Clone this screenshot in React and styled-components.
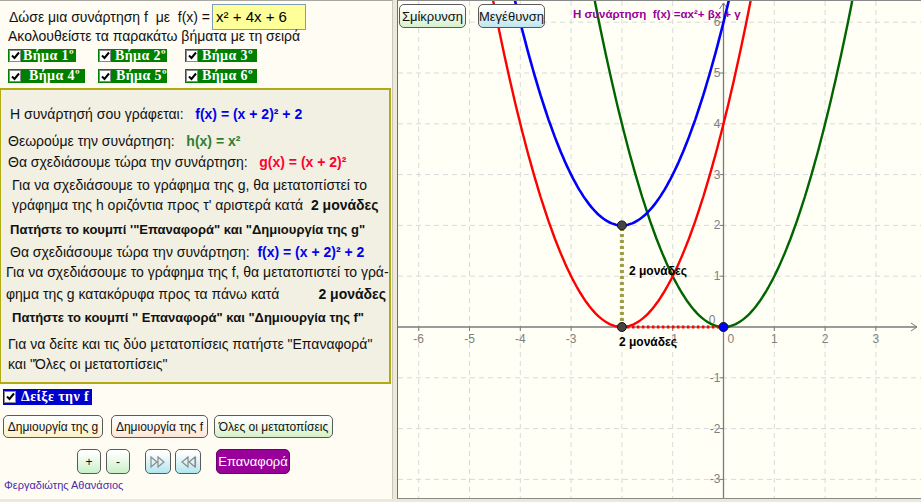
import React from "react";
import styled, { createGlobalStyle } from "styled-components";

const GlobalStyle = createGlobalStyle`
  body {
    margin: 0;
    background: #ece9d8;
    font-family: "Liberation Sans", Arial, sans-serif;
  }
`;

const O = { x: 325.5, y: 326 };
const U = 50.8;
const px = (x) => O.x + x * U;
const py = (y) => O.y - y * U;

const curve = (fn) => {
  const pts = [];
  for (let x = -9; x <= 5; x += 0.04) {
    const y = fn(x);
    if (y > 12) continue;
    pts.push(`${px(x).toFixed(1)},${py(y).toFixed(1)}`);
  }
  return "M" + pts.join(" L");
};

const Page = styled.div`
  display: flex;
  width: 921px;
  height: 499px;
`;

const LeftPanel = styled.div`
  width: 392px;
  height: 498px;
  background: #fffcf3;
  border-top: 1px solid #a8a8a0;
  border-right: 1px solid #c8c6bc;
  display: flex;
  flex-direction: column;
  overflow: hidden;
`;

const Spacer = styled.div`
  width: 4px;
`;

const GraphPanel = styled.div`
  position: relative;
  flex: 1;
  background: #fffff6;
  border-left: 1px solid #707070;
  border-top: 1px solid #8a8a8a;
  border-bottom: 1px solid #8a8a8a;
  overflow: hidden;
`;

const TopRow = styled.div`
  display: flex;
  align-items: center;
  height: 26px;
  margin-top: 3px;
  padding-left: 9px;
  font-size: 14px;
  color: #111;
  white-space: pre;
`;

const FuncInput = styled.div`
  margin-left: 2px;
  width: 89px;
  height: 24px;
  background: #ffff99;
  border: 1px solid #7f9db9;
  font-size: 15px;
  line-height: 24px;
  padding-left: 3px;
  color: #000;
`;

const Instruction = styled.div`
  padding-left: 8px;
  font-size: 14px;
  line-height: 17px;
  margin-top: -2px;
  color: #111;
`;

const StepGrid = styled.div`
  display: grid;
  grid-template-columns: 90px 87px auto;
  padding-left: 8px;
  row-gap: 7px;
  margin-top: 4px;
`;

const Step = styled.div`
  display: inline-flex;
  align-items: center;
  justify-self: start;
  height: ${(p) => p.$h || 13}px;
  width: ${(p) => p.$w}px;
  background: ${(p) => p.$bg || "#007f00"};
  color: #fff;
  font-family: "Liberation Serif", "DejaVu Serif", serif;
  font-weight: bold;
  font-size: 14px;
  letter-spacing: 0.4px;
  white-space: pre;
  gap: ${(p) => p.$pad || 3}px;
  overflow: hidden;
`;

const Box = styled.span`
  display: inline-flex;
  align-items: center;
  justify-content: center;
  flex: none;
  width: 12px;
  height: 12px;
  background: #fff;
  border: 1px solid #8a8a8a;
  box-sizing: border-box;
  margin-left: 1px;
`;

const Check = () => (
  <Box>
    <svg width="9" height="9" viewBox="0 0 9 9">
      <path d="M1 4.5 L3.5 7 L8 1.5" fill="none" stroke="#000" strokeWidth="2" />
    </svg>
  </Box>
);

const InfoPanel = styled.div`
  margin-top: 5px;
  height: 296px;
  width: 391px;
  box-sizing: border-box;
  background: #f1f0e2;
  border: 2px solid #b1ab12;
  border-left-width: 1px;
  display: flex;
  flex-direction: column;
  color: #111;
`;

const Line = styled.div`
  display: flex;
  align-items: center;
  height: 20px;
  margin-top: ${(p) => p.$gap}px;
  padding-left: ${(p) => p.$indent}px;
  padding-right: 3px;
  font-size: ${(p) => (p.$bold ? 13 : 14)}px;
  font-weight: ${(p) => (p.$bold ? "bold" : "normal")};
  white-space: pre;
  justify-content: ${(p) => (p.$spread ? "space-between" : "flex-start")};
`;

const Formula = styled.span`
  font-weight: bold;
  color: ${(p) => p.$color};
  font-size: 14px;
`;

const Strong = styled.span`
  font-weight: bold;
  font-size: 14px;
`;

const ShowRow = styled.div`
  margin-top: 3px;
  padding-left: 3px;
`;

const ButtonRow = styled.div`
  display: flex;
  gap: ${(p) => p.$gap || 7}px;
  padding-left: ${(p) => p.$indent}px;
  margin-top: ${(p) => p.$top}px;
`;

const Btn = styled.div`
  display: flex;
  align-items: center;
  justify-content: center;
  box-sizing: border-box;
  height: ${(p) => p.$h || 23}px;
  width: ${(p) => p.$w}px;
  margin-left: ${(p) => p.$ml || 0}px;
  border: 1px solid #5a5a5a;
  border-radius: 5px;
  background: linear-gradient(#ffffff 10%, ${(p) => p.$tint} 100%);
  font-size: 12px;
  color: #111;
  white-space: pre;
`;

const ResetBtn = styled(Btn)`
  background: #990099;
  border-color: #6a006a;
  color: #fff;
  font-size: 13px;
`;

const Author = styled.div`
  margin-top: 5px;
  padding-left: 4px;
  font-size: 11px;
  color: #4b2ba8;
`;

const ZoomBtn = styled(Btn)`
  position: absolute;
  top: 3px;
  left: ${(p) => p.$left}px;
  font-size: 13px;
`;

const Title = styled.div`
  position: absolute;
  left: 175px;
  top: 7px;
  font-size: 11.5px;
  font-weight: bold;
  color: #990099;
  white-space: pre;
`;

const DoubleTri = ({ dir }) => (
  <svg width="18" height="14" viewBox="0 0 18 14">
    {dir === "right" ? (
      <path d="M2 2 L8 7 L2 12 Z M9 2 L15 7 L9 12 Z" fill="none" stroke="#8a8a8a" strokeWidth="1.2" />
    ) : (
      <path d="M9 2 L3 7 L9 12 Z M16 2 L10 7 L16 12 Z M16.5 2 L16.5 12" fill="none" stroke="#8a8a8a" strokeWidth="1.2" />
    )}
  </svg>
);

const Graph = () => {
  const gx = [-7, -6, -5, -4, -3, -2, -1, 1, 2, 3, 4];
  const gy = [-4, -3, -2, -1, 1, 2, 3, 4, 5, 6, 7];
  const lx = [-6, -5, -4, -3, -2, -1, 1, 2, 3];
  const ly = [-3, -2, -1, 1, 2, 3, 4, 5, 6];
  const grid = "#d9d9d9";
  const axis = "#7a7a7a";
  return (
    <svg width="523" height="497" style={{ display: "block" }}>
      {gx.map((k) => (
        <line key={"gx" + k} x1={px(k)} x2={px(k)} y1={0} y2={498} stroke={grid} strokeDasharray="5,4" />
      ))}
      {gy.map((k) => (
        <line key={"gy" + k} y1={py(k)} y2={py(k)} x1={0} x2={523} stroke={grid} strokeDasharray="5,4" />
      ))}
      <line x1={0} x2={519} y1={O.y} y2={O.y} stroke={axis} strokeWidth="1.3" />
      <line x1={O.x} x2={O.x} y1={2} y2={498} stroke={axis} strokeWidth="1.3" />
      <path d={`M${513},${O.y - 4} L${519},${O.y} L${513},${O.y + 4}`} fill="none" stroke={axis} />
      <path d={`M${O.x - 4},${8} L${O.x},${2} L${O.x + 4},${8}`} fill="none" stroke={axis} />
      {gx.map((k) => (
        <line key={"tx" + k} x1={px(k)} x2={px(k)} y1={O.y} y2={O.y + 4} stroke={axis} />
      ))}
      {gy.map((k) => (
        <line key={"ty" + k} x1={O.x - 4} x2={O.x} y1={py(k)} y2={py(k)} stroke={axis} />
      ))}
      <g fill="#808080" fontSize="12" fontFamily="Liberation Sans, Arial, sans-serif">
        {lx.map((k) =>
          k === -2 ? null : (
            <text key={"lx" + k} x={px(k)} y={O.y + 16} textAnchor="middle">
              {k < 0 ? "-" + Math.abs(k) : k}
            </text>
          )
        )}
        {ly.map((k) => (
          <text key={"ly" + k} x={O.x - 3} y={py(k) + 4} textAnchor="end">
            {k < 0 ? "-" + Math.abs(k) : k}
          </text>
        ))}
        <text x={O.x - 8} y={O.y - 3} textAnchor="end">0</text>
        <text x={O.x + 4} y={O.y + 16}>0</text>
      </g>
      <path d={curve((x) => x * x)} fill="none" stroke="#006400" strokeWidth="2.4" />
      <path d={curve((x) => (x + 2) * (x + 2))} fill="none" stroke="#ff0000" strokeWidth="2.4" />
      <path d={curve((x) => (x + 2) * (x + 2) + 2)} fill="none" stroke="#0000ff" strokeWidth="2.6" />
      <line x1={px(-2)} x2={px(-2)} y1={py(0)} y2={py(2)} stroke="#9c9c4a" strokeWidth="4" strokeDasharray="3,3" />
      <line x1={px(-2)} x2={px(0)} y1={O.y} y2={O.y} stroke="#ff0000" strokeWidth="3" strokeDasharray="2.5,2.5" />
      <circle cx={px(-2)} cy={py(2)} r="4.5" fill="#444" stroke="#111" />
      <circle cx={px(-2)} cy={py(0)} r="4.5" fill="#444" stroke="#111" />
      <circle cx={px(0)} cy={py(0)} r="4.5" fill="#0000ff" stroke="#111" />
      <g fill="#000" fontSize="12" fontWeight="bold" fontFamily="Liberation Sans, Arial, sans-serif">
        <text x={231} y={274}>2 μονάδες</text>
        <text x={221} y={345}>2 μονάδες</text>
      </g>
    </svg>
  );
};

export default function App() {
  return (
    <>
      <GlobalStyle />
      <Page>
        <LeftPanel>
          <TopRow>
            Δώσε μια συνάρτηση f  με  f(x) =
            <FuncInput>x² + 4x + 6</FuncInput>
          </TopRow>
          <Instruction>Ακολουθείστε τα παρακάτω βήματα με τη σειρά</Instruction>
          <StepGrid>
            <Step $w={68} $pad={2}><Check />Βήμα 1º</Step>
            <Step $w={69} $pad={4}><Check />Βήμα 2º</Step>
            <Step $w={72} $pad={4}><Check />Βήμα 3º</Step>
            <Step $w={77} $h={14} $pad={8}><Check />Βήμα 4º</Step>
            <Step $w={69} $h={14} $pad={5}><Check />Βήμα 5º</Step>
            <Step $w={72} $h={14} $pad={4}><Check />Βήμα 6º</Step>
          </StepGrid>
          <InfoPanel>
            <Line $gap={14} $indent={9}>
              Η συνάρτησή σου γράφεται:   <Formula $color="#0000ee">f(x) = (x + 2)² + 2</Formula>
            </Line>
            <Line $gap={7} $indent={7}>
              Θεωρούμε την συνάρτηση:   <Formula $color="#2e7d32">h(x) = x²</Formula>
            </Line>
            <Line $gap={1} $indent={7}>
              Θα σχεδιάσουμε τώρα την συνάρτηση:   <Formula $color="#ff0033">g(x) = (x + 2)²</Formula>
            </Line>
            <Line $gap={3} $indent={11}>
              Για να σχεδιάσουμε το γράφημα της g, θα μετατοπίστεί το
            </Line>
            <Line $gap={0} $indent={11}>
              γράφημα της h οριζόντια προς τ' αριστερά κατά  <Strong>2 μονάδες</Strong>
            </Line>
            <Line $gap={4} $indent={9} $bold>
              Πατήστε το κουμπί '"Επαναφορά" και "Δημιουργία της g"
            </Line>
            <Line $gap={3} $indent={9}>
              Θα σχεδιάσουμε τώρα την συνάρτηση:  <Formula $color="#0000ee">f(x) = (x + 2)² + 2</Formula>
            </Line>
            <Line $gap={0} $indent={5}>
              Για να σχεδιάσουμε το γράφημα της f, θα μετατοπιστεί το γρά-
            </Line>
            <Line $gap={2} $indent={5} $spread>
              φημα της g κατακόρυφα προς τα πάνω κατά
              <Strong>2 μονάδες</Strong>
            </Line>
            <Line $gap={3} $indent={11} $bold>
              Πατήστε το κουμπί " Επαναφορά" και "Δημιουργία της f"
            </Line>
            <Line $gap={7} $indent={7}>
              Για να δείτε και τις δύο μετατοπίσεις πατήστε "Επαναφορά"
            </Line>
            <Line $gap={0} $indent={7}>
              και "Όλες οι μετατοπίσεις"
            </Line>
          </InfoPanel>
          <ShowRow>
            <Step $w={89} $h={16} $pad={5} $bg="#0000cc"><Check />Δείξε την f</Step>
          </ShowRow>
          <ButtonRow $indent={3} $top={10} $gap={8}>
            <Btn $w={100} $tint="#fbf2c8">Δημιουργία της g</Btn>
            <Btn $w={97} $tint="#fde6d6">Δημιουργία της f</Btn>
            <Btn $w={119} $ml={-2} $tint="#d6f1c8">Όλες οι μετατοπίσεις</Btn>
          </ButtonRow>
          <ButtonRow $indent={77} $top={11} $gap={5}>
            <Btn $w={24} $h={25} $tint="#c8f0c8">+</Btn>
            <Btn $w={24} $h={25} $tint="#c8f0c8">-</Btn>
            <Btn $w={26} $h={25} $ml={10} $tint="#b2e6ee"><DoubleTri dir="right" /></Btn>
            <Btn $w={26} $h={25} $ml={-1} $tint="#b2e6ee"><DoubleTri dir="left" /></Btn>
            <ResetBtn $w={74} $h={25} $ml={10}>Επαναφορά</ResetBtn>
          </ButtonRow>
          <Author>Φεργαδιώτης Αθανάσιος</Author>
        </LeftPanel>
        <Spacer />
        <GraphPanel>
          <Graph />
          <ZoomBtn $left={1} $w={67} $h={24} $tint="#d6f1d0">Σμίκρυνση</ZoomBtn>
          <ZoomBtn $left={80} $w={67} $h={24} $tint="#bfe7ef">Μεγέθυνση</ZoomBtn>
          <Title>Η συνάρτηση  f(x) =αx²+ βx + γ</Title>
        </GraphPanel>
      </Page>
    </>
  );
}
